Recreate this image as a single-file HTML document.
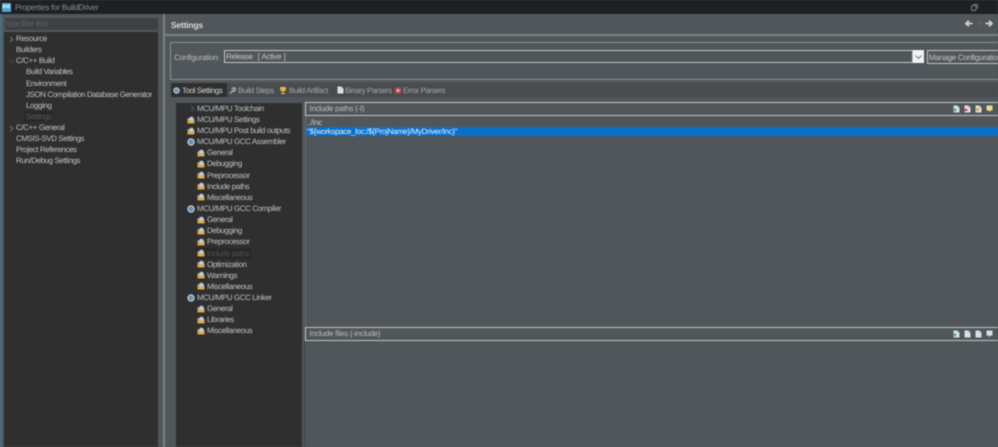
<!DOCTYPE html>
<html><head><meta charset="utf-8">
<style>
html,body{margin:0;padding:0;background:#50565a}
#r{position:relative;width:998px;height:447px;overflow:hidden;background:#50565a;font-family:"Liberation Sans",sans-serif;font-size:7.9px;letter-spacing:-.36px;color:#c0c2c3;text-rendering:geometricPrecision}
#r div{position:absolute;box-sizing:border-box}
.t{white-space:nowrap;line-height:11px;height:11px;margin-top:.1px}
svg{position:absolute;overflow:visible}
svg.i{width:8px;height:8px}
.h{border:1.5px solid #c2c5c6;background:#50565a;color:#b9bcbe;height:14px;line-height:11.500px;padding-left:3.500px;letter-spacing:-.25px}
</style></head><body>
<svg width="0" height="0" style="position:absolute"><defs>
<symbol id="f" viewBox="0 0 9 9"><path d="M0.500 2.500h2l1-1h1v2.500h4v4.500h-8z" fill="#dd9f33"/><circle cx="5" cy="3.500" r="2.800" fill="#a9c1d4"/><circle cx="5" cy="3.500" r="1" fill="#dfe8ee"/><path d="M1.500 6.500h6v1h-6z" fill="#e8b655"/></symbol>
<symbol id="g" viewBox="0 0 9 9"><circle cx="4.500" cy="4.500" r="4.200" fill="#a9c6dc"/><circle cx="4.500" cy="4.500" r="2.100" fill="#3d5f78"/><circle cx="4.500" cy="4.500" r="0.900" fill="#e5edf3"/></symbol>
<symbol id="d" viewBox="0 0 7 8"><path d="M0.500 0.500h4l2 2v5h-6z" fill="#d8dfe6"/><path d="M4.500 0.500l2 2h-2z" fill="#8fa8c0"/></symbol>
</defs></svg>
<div id="r" style="filter:blur(.4px)">

<div style="left:0;top:0;width:998px;height:14px;background:#1f2021"></div>
<div style="left:2px;top:3px;width:9px;height:9px;background:#45a9dc;color:#fff;font-size:5px;font-weight:bold;line-height:9px;text-align:center;letter-spacing:0">IDE</div>
<div class="t" style="left:15px;top:2px;color:#8b8d8e;font-size:8.100px;letter-spacing:-.27px">Properties for BuildDriver</div>
<svg style="left:971px;top:4px" width="7" height="7"><rect x="0.500" y="1.500" width="4.500" height="5" rx="1" fill="none" stroke="#7c7e7f"/><path d="M2.500 0.500h3.500a.5.5 0 0 1 .5.5v3.500" fill="none" stroke="#7c7e7f"/></svg>

<div style="left:0;top:14px;width:159px;height:433px;background:#2f2f2f"></div>
<div style="left:0;top:14px;width:2px;height:433px;background:#4c6f85"></div>
<div style="left:2px;top:14px;width:2px;height:433px;background:#50565a"></div>
<div style="left:158px;top:14px;width:5px;height:433px;background:#50565a"></div>
<div style="left:163px;top:14px;width:2px;height:433px;background:#7e8386"></div>
<div style="left:4px;top:14px;width:154px;height:18px;background:#50565a"></div>
<div style="left:5px;top:18px;width:153px;height:12px;background:#3e4042"></div>
<div class="t" style="left:6px;top:18px;color:#5e6163">type filter text</div>

<svg style="left:9px;top:36px" width="5" height="7"><path d="M1.200 1l2.500 2.500-2.500 2.500" fill="none" stroke="#757778"/></svg>
<svg style="left:8px;top:59px" width="7" height="5"><path d="M1 1l2.500 2.500L6 1" fill="none" stroke="#4a4c4d"/></svg>
<svg style="left:9px;top:125px" width="5" height="7"><path d="M1.200 1l2.500 2.500-2.500 2.500" fill="none" stroke="#757778"/></svg>
<div class="t" style="left:16px;top:33px">Resource</div>
<div class="t" style="left:16px;top:44px">Builders</div>
<div class="t" style="left:16px;top:55px">C/C++ Build</div>
<div class="t" style="left:26px;top:66px">Build Variables</div>
<div class="t" style="left:26px;top:78px">Environment</div>
<div class="t" style="left:26px;top:89px">JSON Compilation Database Generator</div>
<div class="t" style="left:26px;top:100px">Logging</div>
<div style="left:24px;top:111px;width:29px;height:11px;background:#282828"></div>
<div class="t" style="left:26px;top:111px;color:#55585a">Settings</div>
<div class="t" style="left:16px;top:122px">C/C++ General</div>
<div class="t" style="left:16px;top:133px">CMSIS-SVD Settings</div>
<div class="t" style="left:16px;top:144px">Project References</div>
<div class="t" style="left:16px;top:155px">Run/Debug Settings</div>

<div style="left:165px;top:14px;width:833px;height:21px;background:#50565a"></div>
<div class="t" style="left:171px;top:20px;font-size:8.600px;font-weight:bold;color:#d6d8d9;letter-spacing:-.27px">Settings</div>
<div style="left:165px;top:34px;width:833px;height:2px;background:#7e8386"></div>
<svg style="left:965px;top:20px" width="8" height="7"><path d="M7.500 3.500H3M4 .8L1 3.500l3 2.700" fill="none" stroke="#e2e4e5" stroke-width="1.600"/></svg>
<svg style="left:977px;top:22px" width="5" height="3"><path d="M.5.500l2 2 2-2" fill="none" stroke="#686c6f"/></svg>
<svg style="left:985px;top:20px" width="8" height="7"><path d="M.5 3.500H5M4 .8l3 2.700-3 2.700" fill="none" stroke="#e2e4e5" stroke-width="1.600"/></svg>

<div style="left:170px;top:42px;width:840px;height:38px;border:1px solid #8e9294"></div>
<div class="t" style="left:174px;top:52px;color:#b9bcbe;letter-spacing:-.25px">Configuration:</div>
<div style="left:224px;top:50px;width:689px;height:13px;border:1px solid #c2c5c6;background:#50565a"></div>
<div class="t" style="left:226px;top:51px;color:#c4c6c7;letter-spacing:-.3px;word-spacing:.5px">Release &nbsp;[ Active ]</div>
<div style="left:913px;top:50px;width:11px;height:13px;background:#f1f2f2"></div>
<svg style="left:915px;top:55px" width="7" height="4"><path d="M.5.500l3 3 3-3" fill="none" stroke="#777"/></svg>
<div style="left:927px;top:50px;width:90px;height:14px;border:1px solid #c2c5c6"></div>
<div class="t" style="left:929px;top:52px;color:#c4c6c7;letter-spacing:-.27px">Manage Configurations...</div>

<div style="left:171px;top:83px;width:827px;height:14px;background:#484c4f"></div>
<div style="left:171px;top:83px;width:56px;height:14px;background:#2f2f2f"></div>
<svg style="left:173px;top:87px" width="7" height="7"><use href="#g"/></svg>
<div class="t" style="left:182px;top:85px;color:#d6d8d9">Tool Settings</div>
<svg style="left:229px;top:87px" width="7" height="7"><path d="M1 6.500L4 3.500M3 2.500a2 2 0 0 1 3.500-1L5 3l1 .5a2 2 0 0 1-2.500.5" fill="none" stroke="#9fb4c6" stroke-width="1.300"/></svg>
<div class="t" style="left:238px;top:85px;color:#a5a8aa">Build Steps</div>
<svg style="left:279px;top:86px" width="8" height="8"><path d="M1 1h6v2a3 3 0 0 1-2.500 2.500V7H6v1H2V7h1.500V5.500A3 3 0 0 1 1 3z" fill="#e6b43a"/></svg>
<div class="t" style="left:289px;top:85px;color:#a5a8aa">Build Artifact</div>
<svg style="left:337px;top:86px" width="7" height="8"><use href="#d"/></svg>
<div class="t" style="left:345px;top:85px;color:#a5a8aa">Binary Parsers</div>
<svg style="left:395px;top:87px" width="6" height="7"><rect x="0" y="0.500" width="6" height="6" rx="1.500" fill="#c94a55"/><circle cx="3" cy="3.500" r="1.200" fill="#e8d5d8"/></svg>
<div class="t" style="left:403px;top:85px;color:#a5a8aa">Error Parsers</div>

<div style="left:176px;top:103px;width:126px;height:344px;background:#2f2f2f"></div>
<svg style="left:190px;top:105px" width="5" height="7"><path d="M1.200 1l2.500 2.500-2.500 2.500" fill="none" stroke="#5a5c5d"/></svg>
<div class="t" style="left:197px;top:103px">MCU/MPU Toolchain</div>
<svg class="i" style="left:187px;top:115.500px"><use href="#f"/></svg><div class="t" style="left:197px;top:114px">MCU/MPU Settings</div>
<svg class="i" style="left:187px;top:126.500px"><use href="#f"/></svg><div class="t" style="left:197px;top:125px">MCU/MPU Post build outputs</div>
<svg class="i" style="left:187px;top:137.500px"><use href="#g"/></svg><div class="t" style="left:197px;top:136px">MCU/MPU GCC Assembler</div>
<svg class="i" style="left:197px;top:148.500px"><use href="#f"/></svg><div class="t" style="left:207px;top:147px">General</div>
<svg class="i" style="left:197px;top:159.500px"><use href="#f"/></svg><div class="t" style="left:207px;top:158px">Debugging</div>
<svg class="i" style="left:197px;top:170.500px"><use href="#f"/></svg><div class="t" style="left:207px;top:170px">Preprocessor</div>
<svg class="i" style="left:197px;top:181.500px"><use href="#f"/></svg><div class="t" style="left:207px;top:181px">Include paths</div>
<svg class="i" style="left:197px;top:193px"><use href="#f"/></svg><div class="t" style="left:207px;top:192px">Miscellaneous</div>
<svg class="i" style="left:187px;top:204.500px"><use href="#g"/></svg><div class="t" style="left:197px;top:203px">MCU/MPU GCC Compiler</div>
<svg class="i" style="left:197px;top:215.500px"><use href="#f"/></svg><div class="t" style="left:207px;top:214px">General</div>
<svg class="i" style="left:197px;top:226.500px"><use href="#f"/></svg><div class="t" style="left:207px;top:225px">Debugging</div>
<svg class="i" style="left:197px;top:237.500px"><use href="#f"/></svg><div class="t" style="left:207px;top:236px">Preprocessor</div>
<div style="left:196px;top:248px;width:55px;height:11px;background:#282828"></div>
<svg class="i" style="left:197px;top:249px"><use href="#f"/></svg><div class="t" style="left:207px;top:248px;color:#4c4f51">Include paths</div>
<svg class="i" style="left:197px;top:260px"><use href="#f"/></svg><div class="t" style="left:207px;top:259px">Optimization</div>
<svg class="i" style="left:197px;top:271px"><use href="#f"/></svg><div class="t" style="left:207px;top:270px">Warnings</div>
<svg class="i" style="left:197px;top:282px"><use href="#f"/></svg><div class="t" style="left:207px;top:281px">Miscellaneous</div>
<svg class="i" style="left:187px;top:293.500px"><use href="#g"/></svg><div class="t" style="left:197px;top:292px">MCU/MPU GCC Linker</div>
<svg class="i" style="left:197px;top:304.500px"><use href="#f"/></svg><div class="t" style="left:207px;top:303px">General</div>
<svg class="i" style="left:197px;top:315.500px"><use href="#f"/></svg><div class="t" style="left:207px;top:314px">Libraries</div>
<svg class="i" style="left:197px;top:326.500px"><use href="#f"/></svg><div class="t" style="left:207px;top:325px">Miscellaneous</div>

<div class="h" style="left:305px;top:102px;width:700px;height:14px">Include paths (-I)</div>
<div class="t" style="left:307px;top:116.500px;color:#c4c6c7">../Inc</div>
<div style="left:305px;top:126.500px;width:693px;height:9.500px;background:#0a6fc9"></div>
<div class="t" style="left:307px;top:126px;color:#e8f1fa;letter-spacing:-.29px">"${workspace_loc:/${ProjName}/MyDriver/Inc}"</div>
<div style="left:305px;top:116px;width:1px;height:210px;background:#666b6e"></div>
<div class="h" style="left:305px;top:327px;width:700px;height:14px">Include files (-include)</div>
<div style="left:304px;top:341px;width:1px;height:106px;background:#43474a"></div>

<svg style="left:953px;top:105px" width="7" height="8"><use href="#d"/><path d="M0 5h3.500M1.800 3.300v3.400" stroke="#3fae55" stroke-width="1.300"/></svg>
<svg style="left:964px;top:105px" width="7" height="8"><use href="#d"/><path d="M0 5h3.500" stroke="#d9363f" stroke-width="2"/></svg>
<svg style="left:975px;top:105px" width="7" height="8"><use href="#d"/><path d="M1 3h3v3H1z" fill="#e0a945"/></svg>
<svg style="left:986px;top:105px" width="7" height="8"><path d="M.5.500h6v5h-2l-1.500 2v-2H.5z" fill="#eedc8a"/></svg>
<svg style="left:953px;top:330px" width="7" height="8"><use href="#d"/><path d="M0 5h3.500M1.800 3.300v3.400" stroke="#3fae55" stroke-width="1.300"/></svg>
<svg style="left:964px;top:330px" width="7" height="8"><use href="#d"/></svg>
<svg style="left:975px;top:330px" width="7" height="8"><use href="#d"/></svg>
<svg style="left:986px;top:330px" width="7" height="8"><path d="M.5.500h6v5h-2l-1.500 2v-2H.5z" fill="#d8dfe6"/></svg>
</div>
</body></html>
